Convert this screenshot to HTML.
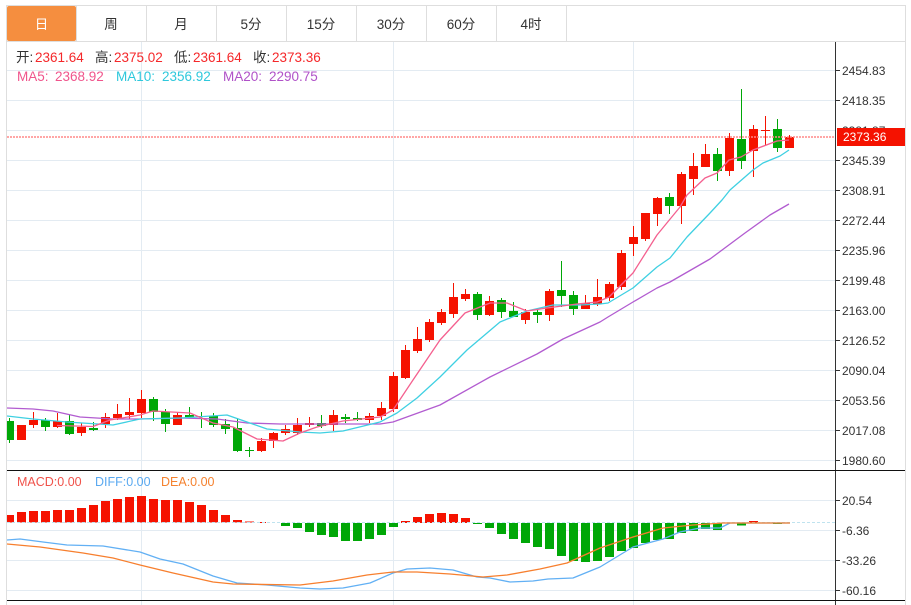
<!DOCTYPE html>
<html lang="zh">
<head>
<meta charset="utf-8">
<title>K线图</title>
<style>
html,body{margin:0;padding:0;background:#fff;width:911px;height:605px;overflow:hidden}
svg{display:block;font-family:"Liberation Sans","Noto Sans CJK SC",sans-serif}
</style>
</head>
<body>
<svg xmlns="http://www.w3.org/2000/svg" width="911" height="605" viewBox="0 0 911 605">
<defs><clipPath id="c"><rect x="7" y="42" width="828" height="563"/></clipPath></defs>
<rect width="911" height="605" fill="#fff"/>
<!-- grid -->
<path d="M7 70.5H835M7 100.5H835M7 130.5H835M7 160.5H835M7 190.5H835M7 220.5H835M7 250.5H835M7 280.5H835M7 310.5H835M7 340.5H835M7 370.5H835M7 400.5H835M7 430.5H835M7 460.5H835M7 500.5H835M7 530.5H835M7 560.5H835M7 590.5H835M141.5 42V605M393.5 42V605M633.5 42V605" stroke="#e3ebf2" stroke-width="1" fill="none"/>
<!-- frame -->
<path d="M6 5.5H906M6 41.5H906M6.5 5V605M905.5 5V605M76.5 5V41M146.5 5V41M216.5 5V41M286.5 5V41M356.5 5V41M426.5 5V41M496.5 5V41M566.5 5V41" stroke="#dedede" fill="none"/>
<rect x="7" y="6" width="69" height="35" rx="2" fill="#f58e3f"/>
<g font-size="13.5" fill="#333" text-anchor="middle">
<text x="41.5" y="29" fill="#fff">日</text>
<text x="111" y="29">周</text>
<text x="181" y="29">月</text>
<text x="251" y="29">5分</text>
<text x="321" y="29">15分</text>
<text x="391" y="29">30分</text>
<text x="461" y="29">60分</text>
<text x="531" y="29">4时</text>
</g>
<g clip-path="url(#c)">
<!-- red wicks -->
<path stroke="#f51200" fill="none" d="M33.5 412V428M57.5 413V428M81.5 423V436M105.5 413V428M117.5 404V420M129.5 398V419M141.5 390V418M177.5 412V425M261.5 438V452M273.5 432V448M285.5 425V435M297.5 418V435M309.5 417V427M333.5 410V431M369.5 413V423M381.5 402V420M393.5 372V412M405.5 345V379M417.5 327V353M429.5 319V342M441.5 309V325M453.5 283V318M465.5 289V301M489.5 296V316M525.5 309V324M549.5 289V321M585.5 295V309M597.5 279V306M609.5 282V301M621.5 250V290M633.5 226V256M645.5 213V241M657.5 197V226M681.5 172V224M693.5 153V195M705.5 144V167M729.5 133V176M753.5 125V177M765.5 116V145M789.5 135V148"/>
<!-- green wicks -->
<path stroke="#00a707" fill="none" d="M9.5 418V443M45.5 418V431M69.5 414V435M93.5 422V431M153.5 397V421M165.5 409V432M189.5 407V418M201.5 412V428M213.5 413V427M225.5 419V434M237.5 418V452M249.5 447V457M321.5 415V428M345.5 414V423M357.5 412V421M477.5 292V320M501.5 298V318M513.5 302V317M537.5 309V323M561.5 261V307M573.5 291V315M669.5 193V214M717.5 148V181M741.5 89V169M777.5 119V152"/>
<!-- red bodies -->
<g fill="#f51200">
<rect x="17" y="425" width="9" height="15"/><rect x="29" y="420" width="9" height="5"/><rect x="53" y="421" width="9" height="6"/><rect x="77" y="427" width="9" height="6"/><rect x="101" y="417" width="9" height="7"/><rect x="113" y="414" width="9" height="4"/><rect x="125" y="412" width="9" height="3"/><rect x="137" y="399" width="9" height="14"/><rect x="173" y="415" width="9" height="10"/><rect x="257" y="441" width="9" height="10"/><rect x="269" y="433" width="9" height="8"/><rect x="281" y="429" width="9" height="4"/><rect x="293" y="425" width="9" height="8"/><rect x="305" y="423" width="9" height="2"/><rect x="329" y="415" width="9" height="10"/><rect x="365" y="416" width="9" height="4"/><rect x="377" y="408" width="9" height="8"/><rect x="389" y="376" width="9" height="33"/><rect x="401" y="350" width="9" height="28"/><rect x="413" y="339" width="9" height="12"/><rect x="425" y="322" width="9" height="18"/><rect x="437" y="312" width="9" height="11"/><rect x="449" y="297" width="9" height="17"/><rect x="461" y="294" width="9" height="5"/><rect x="485" y="301" width="9" height="14"/><rect x="521" y="312" width="9" height="8"/><rect x="545" y="291" width="9" height="24"/><rect x="581" y="303" width="9" height="6"/><rect x="593" y="297" width="9" height="7"/><rect x="605" y="284" width="9" height="14"/><rect x="617" y="253" width="9" height="34"/><rect x="629" y="237" width="9" height="7"/><rect x="641" y="213" width="9" height="26"/><rect x="653" y="198" width="9" height="16"/><rect x="677" y="174" width="9" height="32"/><rect x="689" y="166" width="9" height="13"/><rect x="701" y="154" width="9" height="13"/><rect x="725" y="138" width="9" height="33"/><rect x="749" y="129" width="9" height="22"/><rect x="761" y="130" width="9" height="1"/><rect x="785" y="137" width="9" height="11"/>
</g>
<!-- green bodies -->
<g fill="#00a707">
<rect x="5" y="421" width="9" height="19"/><rect x="41" y="420" width="9" height="7"/><rect x="65" y="421" width="9" height="13"/><rect x="89" y="428" width="9" height="2"/><rect x="149" y="399" width="9" height="13"/><rect x="161" y="412" width="9" height="12"/><rect x="185" y="415" width="9" height="2"/><rect x="197" y="416" width="9" height="1"/><rect x="209" y="416" width="9" height="9"/><rect x="221" y="424" width="9" height="5"/><rect x="233" y="428" width="9" height="23"/><rect x="245" y="450" width="9" height="1"/><rect x="317" y="423" width="9" height="3"/><rect x="341" y="417" width="9" height="2"/><rect x="353" y="418" width="9" height="2"/><rect x="473" y="294" width="9" height="21"/><rect x="497" y="300" width="9" height="12"/><rect x="509" y="311" width="9" height="6"/><rect x="533" y="312" width="9" height="3"/><rect x="557" y="290" width="9" height="6"/><rect x="569" y="295" width="9" height="14"/><rect x="665" y="197" width="9" height="9"/><rect x="713" y="154" width="9" height="17"/><rect x="737" y="139" width="9" height="22"/><rect x="773" y="129" width="9" height="19"/>
</g>
<!-- MA lines -->
<polyline fill="none" stroke="#b25cd0" stroke-width="1.3" stroke-linejoin="round" points="7,408 33,409 53,411 80,417 113,419 140,419 180,418 217,419 247,423 280,424 300,424 380,424 393,422 440,405 490,377 537,354 563,339 600,322 608,317 633,302 657,288 670,282 710,259 745,233 770,215 789,204"/>
<polyline fill="none" stroke="#3fd0e2" stroke-width="1.3" stroke-linejoin="round" points="7,416 33,419 67,422 113,425 140,419 180,418 227,415 247,422 267,429 300,432 320,433 343,431 380,422 397,413 417,398 440,377 467,350 500,322 527,311 553,305 580,305 600,304 608,303 633,288 657,267 670,258 687,237 710,213 722,200 730,190 753,170 763,163 780,156 789,150"/>
<polyline fill="none" stroke="#f4608f" stroke-width="1.3" stroke-linejoin="round" points="57,425.5 93,426.5 110,420 140,415 153,411 190,413 213,423 233,427 257,439 283,441 300,433 317,427 343,421 380,417 393,410 413,380 440,340 465,313 490,303 507,303 527,311 547,308 577,304 597,302 609,297 633,273 657,235 680,207 687,195 705,178 717,173 729,160 741,157 753,150 777,141 789,140"/>
<!-- price line -->
<path d="M7 137H835" stroke="#f88" stroke-width="1.5" stroke-dasharray="2 1" fill="none"/>
<!-- MACD bars -->
<g fill="#f51200">
<rect x="7" y="515" width="7" height="7.5"/><rect x="17" y="512" width="9" height="10.5"/><rect x="29" y="511" width="9" height="11.5"/><rect x="41" y="511" width="9" height="11.5"/><rect x="53" y="510" width="9" height="12.5"/><rect x="65" y="510" width="9" height="12.5"/><rect x="77" y="508" width="9" height="14.5"/><rect x="89" y="505" width="9" height="17.5"/><rect x="101" y="501" width="9" height="21.5"/><rect x="113" y="499" width="9" height="23.5"/><rect x="125" y="497" width="9" height="25.5"/><rect x="137" y="496" width="9" height="26.5"/><rect x="149" y="499" width="9" height="23.5"/><rect x="161" y="500" width="9" height="22.5"/><rect x="173" y="500" width="9" height="22.5"/><rect x="185" y="502" width="9" height="20.5"/><rect x="197" y="505" width="9" height="17.5"/><rect x="209" y="510" width="9" height="12.5"/><rect x="221" y="515" width="9" height="7.5"/><rect x="233" y="520" width="9" height="2.5"/><rect x="245" y="521.5" width="9" height="1"/><rect x="257" y="522" width="9" height="1"/><rect x="401" y="521" width="9" height="2"/><rect x="413" y="517" width="9" height="6"/><rect x="425" y="514" width="9" height="9"/><rect x="437" y="513" width="9" height="10"/><rect x="449" y="514" width="9" height="9"/><rect x="461" y="518" width="9" height="5"/><rect x="749" y="521" width="9" height="2"/>
</g>
<g fill="#00a707">
<rect x="281" y="523" width="9" height="3"/><rect x="293" y="523" width="9" height="5"/><rect x="305" y="523" width="9" height="9"/><rect x="317" y="523" width="9" height="12"/><rect x="329" y="523" width="9" height="14"/><rect x="341" y="523" width="9" height="18"/><rect x="353" y="523" width="9" height="18"/><rect x="365" y="523" width="9" height="16"/><rect x="377" y="523" width="9" height="12"/><rect x="389" y="523" width="9" height="4"/><rect x="473" y="523" width="9" height="1"/><rect x="485" y="523" width="9" height="5"/><rect x="497" y="523" width="9" height="11"/><rect x="509" y="523" width="9" height="16"/><rect x="521" y="523" width="9" height="20"/><rect x="533" y="523" width="9" height="24"/><rect x="545" y="523" width="9" height="26"/><rect x="557" y="523" width="9" height="33"/><rect x="569" y="523" width="9" height="38"/><rect x="581" y="523" width="9" height="39"/><rect x="593" y="523" width="9" height="38"/><rect x="605" y="523" width="9" height="34"/><rect x="617" y="523" width="9" height="28"/><rect x="629" y="523" width="9" height="25"/><rect x="641" y="523" width="9" height="20"/><rect x="653" y="523" width="9" height="17"/><rect x="665" y="523" width="9" height="16"/><rect x="677" y="523" width="9" height="10"/><rect x="689" y="523" width="9" height="8"/><rect x="701" y="523" width="9" height="6"/><rect x="713" y="523" width="9" height="7"/><rect x="737" y="523" width="9" height="2.5"/><rect x="773" y="523" width="9" height="1"/>
</g>
<path d="M7 522.5H835" stroke="#bfe3ef" stroke-dasharray="3 2" fill="none"/>
<polyline fill="none" stroke="#62b0f4" stroke-width="1.3" stroke-linejoin="round" points="7,540 20,539 43,542 67,545 103,546 140,552 160,559 183,564 213,576 237,583 267,585 300,588 320,589 343,588 370,583 393,573 407,569 430,568 453,570 477,577 490,578 510,582 533,581 548,579 573,578 600,567 633,547 663,539 680,532 700,528 720,528 730,523 790,523"/>
<polyline fill="none" stroke="#f77f2e" stroke-width="1.3" stroke-linejoin="round" points="7,544 40,547 83,553 113,558 140,565 173,573 213,582 233,584 300,585 333,581 367,575 393,572 417,572 450,574 483,577 507,575 540,569 567,563 600,548 633,537 663,528 693,525 723,523 790,523"/>
</g>
<!-- axes -->
<path d="M835.5 42V605M835 70.5H840M835 100.5H840M835 160.5H840M835 190.5H840M835 220.5H840M835 250.5H840M835 280.5H840M835 310.5H840M835 340.5H840M835 370.5H840M835 400.5H840M835 430.5H840M835 460.5H840M835 500.5H840M835 530.5H840M835 560.5H840M835 590.5H840" stroke="#333" fill="none"/>
<path d="M7 470.5H905M7 600.5H905" stroke="#111" fill="none"/>
<!-- axis labels -->
<g font-size="12" fill="#333">
<text x="842" y="75">2454.83</text>
<text x="842" y="105">2418.35</text>
<text x="842" y="135">2381.87</text>
<text x="842" y="165">2345.39</text>
<text x="842" y="195">2308.91</text>
<text x="842" y="225">2272.44</text>
<text x="842" y="255">2235.96</text>
<text x="842" y="285">2199.48</text>
<text x="842" y="315">2163.00</text>
<text x="842" y="345">2126.52</text>
<text x="842" y="375">2090.04</text>
<text x="842" y="405">2053.56</text>
<text x="842" y="435">2017.08</text>
<text x="842" y="465">1980.60</text>
<text x="842" y="505">20.54</text>
<text x="842" y="535">-6.36</text>
<text x="842" y="565">-33.26</text>
<text x="842" y="595">-60.16</text>
</g>
<rect x="837" y="128" width="68" height="18" fill="#f51200"/>
<text x="843" y="141" font-size="12" fill="#fff">2373.36</text>
<!-- info -->
<g font-size="13.5">
<text x="16" y="62" fill="#333">开:</text><text x="35" y="62" fill="#f5282a">2361.64</text>
<text x="95" y="62" fill="#333">高:</text><text x="114" y="62" fill="#f5282a">2375.02</text>
<text x="174" y="62" fill="#333">低:</text><text x="193" y="62" fill="#f5282a">2361.64</text>
<text x="253" y="62" fill="#333">收:</text><text x="272" y="62" fill="#f5282a">2373.36</text>
<text x="17" y="81" fill="#f0558c">MA5:</text><text x="55" y="81" fill="#f0558c">2368.92</text>
<text x="116" y="81" fill="#2fc8dc">MA10:</text><text x="162" y="81" fill="#2fc8dc">2356.92</text>
<text x="223" y="81" fill="#b052c8">MA20:</text><text x="269" y="81" fill="#b052c8">2290.75</text>
</g>
<g font-size="12.5">
<text x="17" y="486" fill="#f0524a">MACD:0.00</text>
<text x="95" y="486" fill="#5aa9f0">DIFF:0.00</text>
<text x="161" y="486" fill="#f5822f">DEA:0.00</text>
</g>
</svg>
</body>
</html>
